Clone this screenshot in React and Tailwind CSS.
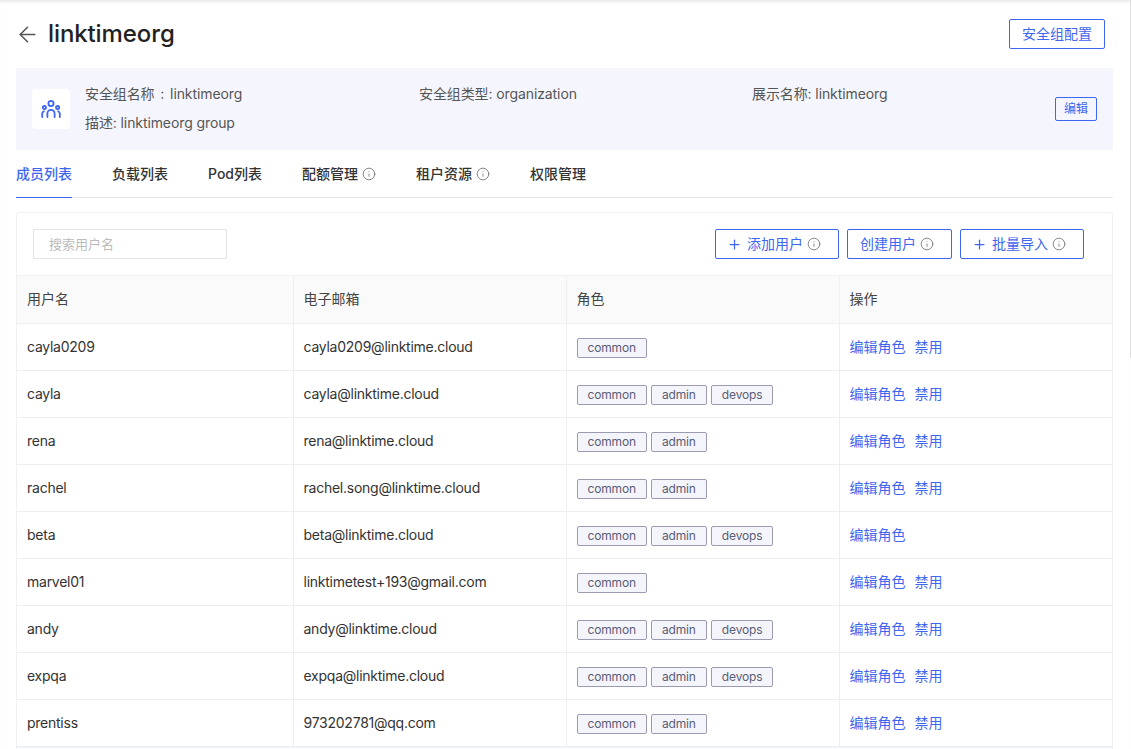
import { ArrowLeft, Info, Plus } from 'lucide-react';

const font = { fontFamily: 'Inter, "Noto Sans CJK SC", sans-serif' };

const users = [
  { name: 'cayla0209', email: 'cayla0209@linktime.cloud', roles: ['common'] },
  { name: 'cayla', email: 'cayla@linktime.cloud', roles: ['common', 'admin', 'devops'] },
  { name: 'rena', email: 'rena@linktime.cloud', roles: ['common', 'admin'] },
  { name: 'rachel', email: 'rachel.song@linktime.cloud', roles: ['common', 'admin'] },
  { name: 'beta', email: 'beta@linktime.cloud', roles: ['common', 'admin', 'devops'], noDisable: true },
  { name: 'marvel01', email: 'linktimetest+193@gmail.com', roles: ['common'] },
  { name: 'andy', email: 'andy@linktime.cloud', roles: ['common', 'admin', 'devops'] },
  { name: 'expqa', email: 'expqa@linktime.cloud', roles: ['common', 'admin', 'devops'] },
  { name: 'prentiss', email: '973202781@qq.com', roles: ['common', 'admin'] },
];

const tabs = [
  { label: '成员列表', active: true },
  { label: '负载列表' },
  { label: 'Pod列表' },
  { label: '配额管理', info: true },
  { label: '租户资源', info: true },
  { label: '权限管理' },
];

function GroupIcon() {
  return (
    <svg width="20" height="20" viewBox="0 0 20 20" fill="none" stroke="#3f66f0" strokeWidth="1.8" strokeLinecap="round">
      <circle cx="10" cy="4.5" r="2.6" />
      <circle cx="3.4" cy="8.6" r="1.6" />
      <circle cx="16.6" cy="8.6" r="1.6" />
      <path d="M6.4 18v-3.6a3.6 3.6 0 0 1 7.2 0V18" />
      <path d="M1.2 18v-3.4a2.4 2.4 0 0 1 1.6-2.3" />
      <path d="M18.8 18v-3.4a2.4 2.4 0 0 0-1.6-2.3" />
    </svg>
  );
}

function ToolbarButton({ label, plus, width }) {
  return (
    <button type="button" className={`flex h-[30px] items-center rounded-[2px] border border-[#3f66f0] text-sm text-[#3f66f0] ${width} ${plus ? 'pl-[11px]' : 'pl-3'}`}>
      {plus && <Plus className="mr-[5px] h-[15px] w-[15px]" strokeWidth={2} />}
      {label}
      <Info className="ml-1 h-[14px] w-[14px] text-[#777]" strokeWidth={1.5} />
    </button>
  );
}

export default function App() {
  return (
    <div style={font} className="relative h-[749px] overflow-hidden bg-white pr-[18px] pl-4 shadow-[inset_0_4px_4px_-3px_rgba(0,0,0,0.12)] text-[#333]">
      {/* scrollbar thumb */}
      <div className="absolute top-0 right-0 h-[358px] w-px bg-[#dcdcdc]" />

      <div className="flex h-[68px] items-center justify-between pr-2">
        <div className="flex items-center gap-2">
          <ArrowLeft className="-ml-px h-[25px] w-[25px] text-[#555]" strokeWidth={1.5} />
          <h1 className="text-2xl font-medium tracking-[-0.1px] text-[#222]">linktimeorg</h1>
        </div>
        <button type="button" className="h-[30px] w-24 rounded-[2px] border border-[#3f66f0] text-sm text-[#3f66f0]">
          安全组配置
        </button>
      </div>

      <div className="flex h-[82px] items-center bg-[#f5f6fd] pr-4 pl-4">
        <div className="flex h-10 w-[38px] shrink-0 items-center justify-center rounded bg-white">
          <GroupIcon />
        </div>
        <div className="mb-[2px] ml-[15px] grid flex-1 grid-cols-[334px_333px_1fr] gap-y-[9px] text-sm leading-5 tracking-[-0.1px] text-[#555]">
          <div>安全组名称<span className="mx-[2px]"> : </span>linktimeorg</div>
          <div>安全组类型: organization</div>
          <div>展示名称: linktimeorg</div>
          <div>描述: linktimeorg group</div>
        </div>
        <button type="button" className="h-6 w-[42px] rounded-[2px] border border-[#3f66f0] text-xs text-[#3f66f0]">
          编辑
        </button>
      </div>

      <div className="flex h-12 gap-10 border-b border-[#e4e5ec]">
        {tabs.map((tab) => (
          <div
            key={tab.label}
            className={`-mb-px flex items-center border-b text-sm font-medium ${tab.active ? 'border-[#3f66f0] text-[#3f66f0]' : 'border-transparent text-[#333]'}`}
          >
            {tab.label}
            {tab.info && <Info className="ml-1 h-[14px] w-[14px] text-[#777]" strokeWidth={1.5} />}
          </div>
        ))}
      </div>

      <div className="mt-[14px] rounded-t-[3px] border border-[#f0f0f2]">
        <div className="flex h-[62px] items-center justify-between pr-7 pl-4">
          <input
            placeholder="搜索用户名"
            className="h-[30px] w-[194px] border border-[#e4e5ec] px-[15px] pb-px text-[13px] outline-none placeholder:text-[#bbb]"
          />
          <div className="flex gap-2">
            <ToolbarButton label="添加用户" plus width="w-[124px]" />
            <ToolbarButton label="创建用户" width="w-[105px]" />
            <ToolbarButton label="批量导入" plus width="w-[124px]" />
          </div>
        </div>

        <table className="w-full table-fixed border-collapse text-sm">
          <colgroup>
            <col className="w-[276px]" />
            <col className="w-[273px]" />
            <col className="w-[273px]" />
            <col />
          </colgroup>
          <thead>
            <tr className="h-12 bg-[#fafafa] text-left text-[#444]">
              <th className="border-y border-[#f0f0f2] px-[10px] pb-[2px] font-normal">用户名</th>
              <th className="border border-[#f0f0f2] px-[10px] pb-[2px] font-normal">电子邮箱</th>
              <th className="border border-[#f0f0f2] px-[10px] pb-[2px] font-normal">角色</th>
              <th className="border-y border-[#f0f0f2] px-[10px] pb-[2px] font-normal">操作</th>
            </tr>
          </thead>
          <tbody>
            {users.map((user) => (
              <tr key={user.name} className="h-[47px]">
                <td className="border-b border-[#eceef4] px-[10px] tracking-[-0.25px]">{user.name}</td>
                <td className="border-x border-b border-[#eceef4] px-[10px] tracking-[-0.25px]">{user.email}</td>
                <td className="border-x border-b border-[#eceef4] px-[10px]">
                  <div className="flex gap-1 pt-[2px]">
                    {user.roles.map((role) => (
                      <span key={role} className="flex h-5 items-center rounded-[2px] border border-[#9b9cb2] bg-[#f4f5fa] px-[10px] text-xs tracking-[-0.15px] text-[#5b5c75]">
                        {role}
                      </span>
                    ))}
                  </div>
                </td>
                <td className="border-b border-[#eceef4] px-[10px] text-[#3f66f0]">
                  编辑角色
                  {!user.noDisable && <span className="ml-[9px]">禁用</span>}
                </td>
              </tr>
            ))}
            <tr className="h-[47px] bg-[#f5f7fc]">
              <td colSpan={4} />
            </tr>
          </tbody>
        </table>
      </div>
    </div>
  );
}
